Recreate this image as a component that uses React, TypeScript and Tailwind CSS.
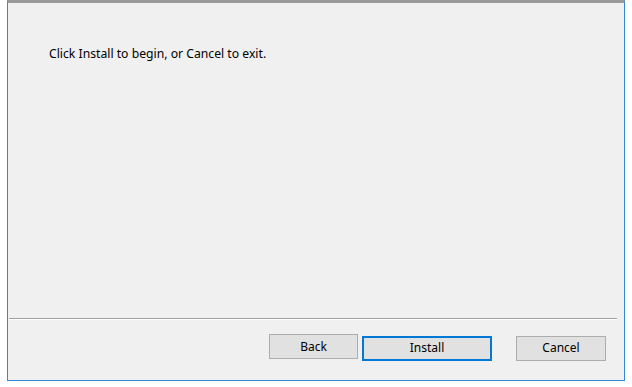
import React from "react";

const font = { fontFamily: '"Segoe UI", "Noto Sans", "Liberation Sans", sans-serif' };

function Btn({ label, primary, w }: { label: string; primary?: boolean; w: string }) {
  return (
    <button
      className={
        primary
          ? `h-[25px] ${w} border-2 border-[#0078d7] bg-[#e1e1e1] text-[12px] text-black`
          : `h-[25px] ${w} border border-[#adadad] bg-[#e1e1e1] text-[12px] text-black`
      }
    >
      {label}
    </button>
  );
}

export default function App() {
  return (
    <div className="w-[632px] h-[387px] bg-white" style={font}>
      <div className="ml-[7px] w-[618px] h-[381px] flex flex-col bg-[#f0f0f0] border-x border-b border-[#3385d6] border-t-[3px] border-t-[#9a9a9a]">
        {/* content */}
        <div className="flex-1 pl-[41px] pt-[43px]">
          <p className="text-[12.2px] leading-[16px] text-black">
            Click Install to begin, or Cancel to exit.
          </p>
        </div>

        {/* divider */}
        <div className="mx-[1px] mr-[7px] h-[2px] border-t border-[#a0a0a0] border-b border-b-white" />

        {/* footer */}
        <div className="h-[60px] flex items-start pt-[14px] pl-[261px]">
          <Btn label="Back" w="w-[89px]" />
          <div className="ml-[4px]">
            <Btn label="Install" primary w="w-[130px]" />
          </div>
          <div className="ml-[24px]">
            <Btn label="Cancel" w="w-[90px]" />
          </div>
        </div>
      </div>
    </div>
  );
}
